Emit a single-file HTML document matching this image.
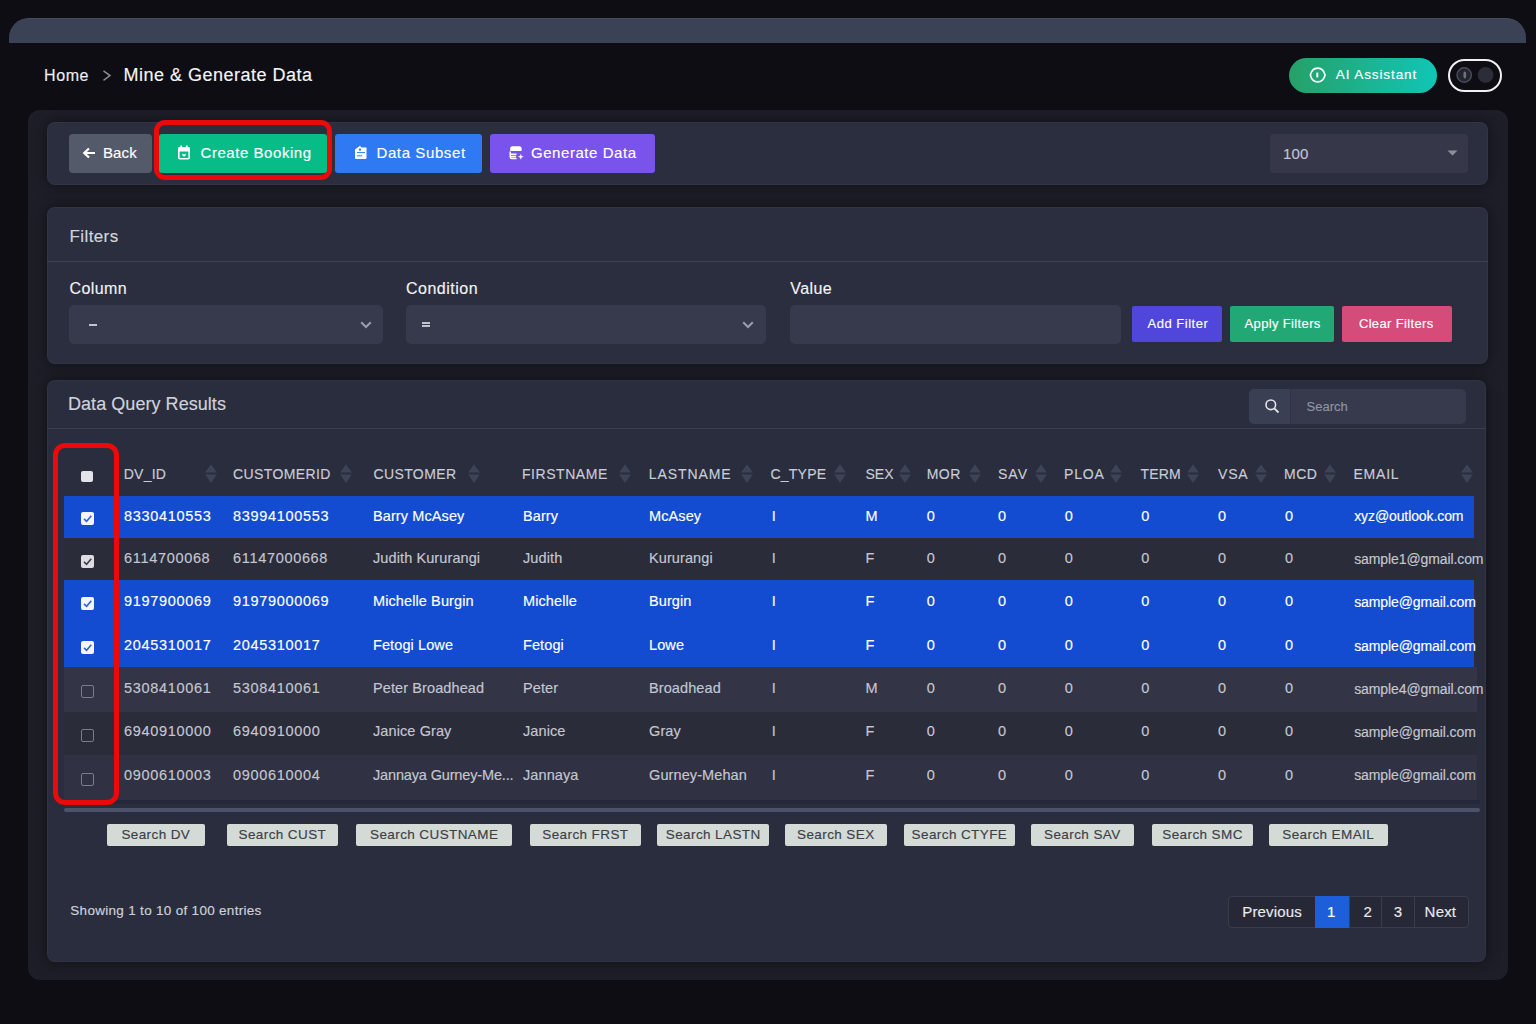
<!DOCTYPE html><html><head><meta charset="utf-8"><style>
html,body{margin:0;padding:0;width:1536px;height:1024px;overflow:hidden;background:#0e0d13;font-family:"Liberation Sans",sans-serif}
.t{position:absolute;line-height:1;white-space:nowrap;-webkit-text-stroke:0.15px currentColor}
.b{position:absolute;box-sizing:border-box}
svg{position:absolute;overflow:visible}
</style></head><body>
<div class="b" style="left:9.0px;top:18.0px;width:1517.0px;height:24.8px;background:#3b4255;border-radius:20px 20px 0 0;border-top:1.5px solid #454c5f"></div>
<div class="t" style="left:44.0px;top:67.5px;font-size:16px;color:#eceef2;letter-spacing:0.6px;font-weight:400;">Home</div>
<svg style="left:102px;top:70px" width="10" height="12"><path d="M1.5 0.8 L8 5.6 L1.5 10.4" fill="none" stroke="#8a8d99" stroke-width="1.5"/></svg>
<div class="t" style="left:123.4px;top:65.8px;font-size:18px;color:#f4f5f8;letter-spacing:0.5px;font-weight:400;">Mine &amp; Generate Data</div>
<div class="b" style="left:1289.0px;top:58.0px;width:148.0px;height:35.0px;background:linear-gradient(90deg,#26a068,#10c6b6);border-radius:18px;"></div>
<svg style="left:1309px;top:68px" width="18" height="15"><path d="M1.3 7 C3.8 -2.2 13.6 -2.2 16.1 7 C13.6 16.2 3.8 16.2 1.3 7 Z" fill="none" stroke="#fff" stroke-width="1.6"/><path d="M8.3 4.6 V9.4" stroke="#fff" stroke-width="2"/></svg>
<div class="t" style="left:1335.8px;top:67.6px;font-size:13.5px;color:#ffffff;letter-spacing:0.9px;font-weight:400;">AI Assistant</div>
<div class="b" style="left:1447.5px;top:59.0px;width:54.5px;height:33.0px;background:transparent;border-radius:17px;border:2px solid #f2f2f2"></div>
<svg style="left:1455px;top:66px" width="40" height="18"><circle cx="9.2" cy="9" r="7.2" fill="#22242e" stroke="#4a4e5e" stroke-width="1.4"/><ellipse cx="9.8" cy="9" rx="1.4" ry="3.4" fill="#70737f"/><circle cx="30.6" cy="9" r="7.9" fill="#2b2d39"/></svg>
<div class="b" style="left:27.5px;top:110.0px;width:1480.5px;height:869.6px;background:#1d1e27;border-radius:12px;"></div>
<div class="b" style="left:47.0px;top:121.5px;width:1441.0px;height:63.0px;background:#2b2e3e;border-radius:8px;box-shadow:0 0 14px 2px rgba(0,0,0,0.35);border:1px solid rgba(255,255,255,0.03)"></div>
<div class="b" style="left:69.0px;top:134.0px;width:83.0px;height:38.5px;background:#555a6b;border-radius:4px;"></div>
<svg style="left:82px;top:147px" width="14" height="12"><path d="M13 6 H2.5 M7 1.5 L2.2 6 L7 10.5" fill="none" stroke="#fff" stroke-width="2.2"/></svg>
<div class="t" style="left:103.0px;top:145.3px;font-size:15px;color:#ffffff;letter-spacing:0.1px;font-weight:400;">Back</div>
<div class="b" style="left:154.0px;top:120.0px;width:178.0px;height:60.0px;background:transparent;border-radius:11px;border:5px solid #ec0909"></div>
<div class="b" style="left:159.0px;top:134.0px;width:168.0px;height:39.0px;background:#08bc87;border-radius:3px;"></div>
<svg style="left:177px;top:145px" width="14" height="15"><rect x="1.8" y="3" width="10.4" height="10.8" rx="1.2" fill="none" stroke="#fff" stroke-width="1.6"/><path d="M1 3.5 Q1 2.2 2.3 2.2 H11.7 Q13 2.2 13 3.5 V6.6 H1 Z" fill="#fff"/><path d="M4.2 0.6 V3 M9.8 0.6 V3" stroke="#fff" stroke-width="1.8"/><path d="M5 9.3 Q5.9 8.5 7 9.4 Q8.1 8.5 9 9.3 Q9 10.5 7 11.8 Q5 10.5 5 9.3 Z" fill="#fff"/></svg>
<div class="t" style="left:200.5px;top:145.3px;font-size:15px;color:#ffffff;letter-spacing:0.55px;font-weight:400;">Create Booking</div>
<div class="b" style="left:335.0px;top:134.0px;width:147.0px;height:38.5px;background:#2f79f3;border-radius:3px;"></div>
<svg style="left:354px;top:145px" width="14" height="15"><path d="M1 4.5 L6 0.8 L7.5 2.5 H12.5 V13 Q12.5 14 11.5 14 H2 Q1 14 1 13 Z" fill="#fff"/><circle cx="6" cy="4.6" r="1.2" fill="#2f79f3"/><path d="M3 7.6 H11 M3 10.8 H8" stroke="#2f79f3" stroke-width="1"/></svg>
<div class="t" style="left:376.5px;top:145.3px;font-size:15px;color:#ffffff;letter-spacing:0.6px;font-weight:400;">Data Subset</div>
<div class="b" style="left:490.0px;top:134.0px;width:165.0px;height:38.5px;background:#7a52ec;border-radius:3px;"></div>
<svg style="left:510px;top:146px" width="15" height="14"><path d="M0.2 2.2 Q0.2 0.2 2.2 0.2 H9.5 Q11.6 0.2 11.6 2.2 V5 H0.2 Z" fill="#fff"/><path d="M0.2 5.6 V11 Q0.2 12.5 1.7 12.5 H6.5 M0.9 8.2 H6.5 M0.9 10.5 H6" stroke="#fff" stroke-width="1.4" fill="none"/><path d="M10.8 7.8 L11.6 10 L13.8 10.8 L11.6 11.6 L10.8 13.8 L10 11.6 L7.8 10.8 L10 10 Z" fill="#fff"/></svg>
<div class="t" style="left:531.0px;top:145.3px;font-size:15px;color:#ffffff;letter-spacing:0.55px;font-weight:400;">Generate Data</div>
<div class="b" style="left:1270.0px;top:134.0px;width:198.0px;height:39.0px;background:#363849;border-radius:4px;"></div>
<div class="t" style="left:1283.0px;top:145.9px;font-size:15px;color:#c2c5d0;letter-spacing:0.2px;font-weight:400;">100</div>
<svg style="left:1447px;top:150px" width="11" height="6"><path d="M0.5 0.5 H10.5 L5.5 5.5 Z" fill="#8d909c"/></svg>
<div class="b" style="left:47.0px;top:207.0px;width:1441.0px;height:157.0px;background:#2b2e3e;border-radius:8px;box-shadow:0 0 14px 2px rgba(0,0,0,0.35);border:1px solid rgba(255,255,255,0.03)"></div>
<div class="b" style="left:47.0px;top:260.5px;width:1441.0px;height:1.0px;background:#3c4052;border-radius:0;"></div>
<div class="t" style="left:69.5px;top:227.6px;font-size:17px;color:#d3d5de;letter-spacing:0.4px;font-weight:400;">Filters</div>
<div class="t" style="left:69.5px;top:280.5px;font-size:16px;color:#f2f3f6;letter-spacing:0.4px;font-weight:400;">Column</div>
<div class="t" style="left:406.0px;top:280.5px;font-size:16px;color:#f2f3f6;letter-spacing:0.5px;font-weight:400;">Condition</div>
<div class="t" style="left:790.3px;top:280.5px;font-size:16px;color:#f2f3f6;letter-spacing:0.4px;font-weight:400;">Value</div>
<div class="b" style="left:69.0px;top:305.0px;width:314.0px;height:38.6px;background:#373a4d;border-radius:5px;"></div>
<div class="b" style="left:406.0px;top:305.0px;width:360.0px;height:38.6px;background:#373a4d;border-radius:5px;"></div>
<div class="b" style="left:790.0px;top:305.0px;width:331.0px;height:38.6px;background:#373a4d;border-radius:5px;"></div>
<div class="b" style="left:88.6px;top:324.1px;width:8.5px;height:1.7px;background:#c0c2cc;border-radius:0;"></div>
<div class="b" style="left:422.0px;top:322.0px;width:8.2px;height:1.6px;background:#c0c2cc;border-radius:0;"></div>
<div class="b" style="left:422.0px;top:325.3px;width:8.2px;height:1.7px;background:#c0c2cc;border-radius:0;"></div>
<svg style="left:360px;top:321px" width="12" height="8"><path d="M1.2 1.2 L6 6 L10.8 1.2" fill="none" stroke="#9a9dab" stroke-width="2"/></svg>
<svg style="left:742px;top:321px" width="12" height="8"><path d="M1.2 1.2 L6 6 L10.8 1.2" fill="none" stroke="#9a9dab" stroke-width="2"/></svg>
<div class="b" style="left:1131.6px;top:306.0px;width:90.1px;height:36.0px;background:#5046dc;border-radius:2px;"></div>
<div class="t" style="left:1147.6px;top:317.0px;font-size:13px;color:#ffffff;letter-spacing:0.5px;font-weight:400;">Add Filter</div>
<div class="b" style="left:1230.0px;top:306.0px;width:104.0px;height:36.0px;background:#21a874;border-radius:2px;"></div>
<div class="t" style="left:1244.6px;top:317.0px;font-size:13px;color:#ffffff;letter-spacing:0.35px;font-weight:400;">Apply Filters</div>
<div class="b" style="left:1342.0px;top:306.0px;width:110.0px;height:36.0px;background:#d54b79;border-radius:2px;"></div>
<div class="t" style="left:1358.9px;top:317.0px;font-size:13px;color:#ffffff;letter-spacing:0.35px;font-weight:400;">Clear Filters</div>
<div class="b" style="left:47.0px;top:380.0px;width:1439.0px;height:581.6px;background:#2a2d3e;border-radius:8px;box-shadow:0 0 14px 2px rgba(0,0,0,0.35);border:1px solid rgba(255,255,255,0.03)"></div>
<div class="b" style="left:47.0px;top:427.5px;width:1439.0px;height:1.0px;background:#3a3e50;border-radius:0;"></div>
<div class="t" style="left:68.0px;top:394.8px;font-size:18px;color:#d0d2db;letter-spacing:0.05px;font-weight:400;">Data Query Results</div>
<div class="b" style="left:1249.0px;top:388.5px;width:216.5px;height:35.5px;background:#363a4c;border-radius:5px;"></div>
<div class="b" style="left:1249.0px;top:388.5px;width:41.6px;height:35.5px;background:#3b3f53;border-radius:5px 0 0 5px;"></div>
<div class="b" style="left:1290.0px;top:388.5px;width:1.0px;height:35.5px;background:#2f3242;border-radius:0;"></div>
<svg style="left:1264px;top:398px" width="16" height="16"><circle cx="6.8" cy="6.8" r="4.8" fill="none" stroke="#e2e4ea" stroke-width="1.6"/><path d="M10.3 10.3 L14.5 14.5" stroke="#e2e4ea" stroke-width="1.8"/></svg>
<div class="t" style="left:1306.5px;top:399.7px;font-size:13px;color:#8f93a3;letter-spacing:0px;font-weight:400;">Search</div>
<div class="t" style="left:123.8px;top:466.9px;font-size:14px;color:#c9ccd6;letter-spacing:0.2px;font-weight:400;">DV_ID</div>
<svg style="left:204.5px;top:464px" width="12" height="19"><path d="M6 0.2 L11.8 8.6 H0.2 Z M0.2 10.6 H11.8 L6 19 Z" fill="#3e4456"/></svg>
<div class="t" style="left:233.0px;top:466.9px;font-size:14px;color:#c9ccd6;letter-spacing:0.4px;font-weight:400;">CUSTOMERID</div>
<svg style="left:340.0px;top:464px" width="12" height="19"><path d="M6 0.2 L11.8 8.6 H0.2 Z M0.2 10.6 H11.8 L6 19 Z" fill="#3e4456"/></svg>
<div class="t" style="left:373.4px;top:466.9px;font-size:14px;color:#c9ccd6;letter-spacing:0.4px;font-weight:400;">CUSTOMER</div>
<svg style="left:468.0px;top:464px" width="12" height="19"><path d="M6 0.2 L11.8 8.6 H0.2 Z M0.2 10.6 H11.8 L6 19 Z" fill="#3e4456"/></svg>
<div class="t" style="left:522.0px;top:466.9px;font-size:14px;color:#c9ccd6;letter-spacing:0.55px;font-weight:400;">FIRSTNAME</div>
<svg style="left:618.8px;top:464px" width="12" height="19"><path d="M6 0.2 L11.8 8.6 H0.2 Z M0.2 10.6 H11.8 L6 19 Z" fill="#3e4456"/></svg>
<div class="t" style="left:648.8px;top:466.9px;font-size:14px;color:#c9ccd6;letter-spacing:0.9px;font-weight:400;">LASTNAME</div>
<svg style="left:741.2px;top:464px" width="12" height="19"><path d="M6 0.2 L11.8 8.6 H0.2 Z M0.2 10.6 H11.8 L6 19 Z" fill="#3e4456"/></svg>
<div class="t" style="left:770.4px;top:466.9px;font-size:14px;color:#c9ccd6;letter-spacing:0.25px;font-weight:400;">C_TYPE</div>
<svg style="left:834.2px;top:464px" width="12" height="19"><path d="M6 0.2 L11.8 8.6 H0.2 Z M0.2 10.6 H11.8 L6 19 Z" fill="#3e4456"/></svg>
<div class="t" style="left:865.5px;top:466.9px;font-size:14px;color:#c9ccd6;letter-spacing:0px;font-weight:400;">SEX</div>
<svg style="left:899.2px;top:464px" width="12" height="19"><path d="M6 0.2 L11.8 8.6 H0.2 Z M0.2 10.6 H11.8 L6 19 Z" fill="#3e4456"/></svg>
<div class="t" style="left:926.7px;top:466.9px;font-size:14px;color:#c9ccd6;letter-spacing:0.5px;font-weight:400;">MOR</div>
<svg style="left:969.4px;top:464px" width="12" height="19"><path d="M6 0.2 L11.8 8.6 H0.2 Z M0.2 10.6 H11.8 L6 19 Z" fill="#3e4456"/></svg>
<div class="t" style="left:998.0px;top:466.9px;font-size:14px;color:#c9ccd6;letter-spacing:1.0px;font-weight:400;">SAV</div>
<svg style="left:1035.0px;top:464px" width="12" height="19"><path d="M6 0.2 L11.8 8.6 H0.2 Z M0.2 10.6 H11.8 L6 19 Z" fill="#3e4456"/></svg>
<div class="t" style="left:1064.0px;top:466.9px;font-size:14px;color:#c9ccd6;letter-spacing:0.8px;font-weight:400;">PLOA</div>
<svg style="left:1109.8px;top:464px" width="12" height="19"><path d="M6 0.2 L11.8 8.6 H0.2 Z M0.2 10.6 H11.8 L6 19 Z" fill="#3e4456"/></svg>
<div class="t" style="left:1140.4px;top:466.9px;font-size:14px;color:#c9ccd6;letter-spacing:0.2px;font-weight:400;">TERM</div>
<svg style="left:1187.0px;top:464px" width="12" height="19"><path d="M6 0.2 L11.8 8.6 H0.2 Z M0.2 10.6 H11.8 L6 19 Z" fill="#3e4456"/></svg>
<div class="t" style="left:1218.0px;top:466.9px;font-size:14px;color:#c9ccd6;letter-spacing:0.8px;font-weight:400;">VSA</div>
<svg style="left:1254.6px;top:464px" width="12" height="19"><path d="M6 0.2 L11.8 8.6 H0.2 Z M0.2 10.6 H11.8 L6 19 Z" fill="#3e4456"/></svg>
<div class="t" style="left:1284.0px;top:466.9px;font-size:14px;color:#c9ccd6;letter-spacing:0.5px;font-weight:400;">MCD</div>
<svg style="left:1324.0px;top:464px" width="12" height="19"><path d="M6 0.2 L11.8 8.6 H0.2 Z M0.2 10.6 H11.8 L6 19 Z" fill="#3e4456"/></svg>
<div class="t" style="left:1353.4px;top:466.9px;font-size:14px;color:#c9ccd6;letter-spacing:0.8px;font-weight:400;">EMAIL</div>
<svg style="left:1461.2px;top:464px" width="12" height="19"><path d="M6 0.2 L11.8 8.6 H0.2 Z M0.2 10.6 H11.8 L6 19 Z" fill="#3e4456"/></svg>
<div class="b" style="left:81.0px;top:470.5px;width:11.5px;height:11.0px;background:#e3e4ea;border-radius:2px;"></div>
<div class="b" style="left:64.0px;top:495.5px;width:1410.0px;height:42.2px;background:#134cd1;border-radius:0;"></div>
<div class="b" style="left:81.0px;top:512.1px;width:13.0px;height:13.0px;background:#f4f5f8;border-radius:2px;"></div>
<svg style="left:81px;top:512.1px" width="13" height="13"><path d="M3 6.8 L5.6 9.3 L10.3 3.8" fill="none" stroke="#2f62d6" stroke-width="1.6"/></svg>
<div class="t" style="left:124.0px;top:509.0px;font-size:14.5px;color:#ffffff;letter-spacing:0.68px;font-weight:400;">8330410553</div>
<div class="t" style="left:233.0px;top:509.0px;font-size:14.5px;color:#ffffff;letter-spacing:0.68px;font-weight:400;">83994100553</div>
<div class="t" style="left:373.0px;top:509.0px;font-size:14.5px;color:#ffffff;letter-spacing:0.1px;font-weight:400;">Barry McAsey</div>
<div class="t" style="left:523.0px;top:509.0px;font-size:14.5px;color:#ffffff;letter-spacing:0.1px;font-weight:400;">Barry</div>
<div class="t" style="left:649.0px;top:509.0px;font-size:14.5px;color:#ffffff;letter-spacing:0.1px;font-weight:400;">McAsey</div>
<div class="t" style="left:771.7px;top:509.0px;font-size:14.5px;color:#ffffff;letter-spacing:0px;font-weight:400;">I</div>
<div class="t" style="left:865.5px;top:509.0px;font-size:14.5px;color:#ffffff;letter-spacing:0px;font-weight:400;">M</div>
<div class="t" style="left:926.7px;top:509.0px;font-size:14.5px;color:#ffffff;letter-spacing:0.3px;font-weight:400;">0</div>
<div class="t" style="left:998.0px;top:509.0px;font-size:14.5px;color:#ffffff;letter-spacing:0.3px;font-weight:400;">0</div>
<div class="t" style="left:1064.7px;top:509.0px;font-size:14.5px;color:#ffffff;letter-spacing:0.3px;font-weight:400;">0</div>
<div class="t" style="left:1141.2px;top:509.0px;font-size:14.5px;color:#ffffff;letter-spacing:0.3px;font-weight:400;">0</div>
<div class="t" style="left:1218.0px;top:509.0px;font-size:14.5px;color:#ffffff;letter-spacing:0.3px;font-weight:400;">0</div>
<div class="t" style="left:1285.0px;top:509.0px;font-size:14.5px;color:#ffffff;letter-spacing:0.3px;font-weight:400;">0</div>
<div class="t" style="left:1354.2px;top:509.4px;font-size:14px;color:#ffffff;letter-spacing:-0.1px;font-weight:400;">xyz@outlook.com</div>
<div class="b" style="left:64.0px;top:537.7px;width:1413.0px;height:42.6px;background:#2a2c3a;border-radius:0;"></div>
<div class="b" style="left:81.0px;top:554.5px;width:13.0px;height:13.0px;background:#dcdde3;border-radius:2px;"></div>
<svg style="left:81px;top:554.5px" width="13" height="13"><path d="M3 6.8 L5.6 9.3 L10.3 3.8" fill="none" stroke="#3d404c" stroke-width="1.6"/></svg>
<div class="t" style="left:124.0px;top:551.2px;font-size:14.5px;color:#c4c7d1;letter-spacing:0.68px;font-weight:400;">6114700068</div>
<div class="t" style="left:233.0px;top:551.2px;font-size:14.5px;color:#c4c7d1;letter-spacing:0.68px;font-weight:400;">61147000668</div>
<div class="t" style="left:373.0px;top:551.2px;font-size:14.5px;color:#c4c7d1;letter-spacing:0.1px;font-weight:400;">Judith Kururangi</div>
<div class="t" style="left:523.0px;top:551.2px;font-size:14.5px;color:#c4c7d1;letter-spacing:0.1px;font-weight:400;">Judith</div>
<div class="t" style="left:649.0px;top:551.2px;font-size:14.5px;color:#c4c7d1;letter-spacing:0.1px;font-weight:400;">Kururangi</div>
<div class="t" style="left:771.7px;top:551.2px;font-size:14.5px;color:#c4c7d1;letter-spacing:0px;font-weight:400;">I</div>
<div class="t" style="left:865.5px;top:551.2px;font-size:14.5px;color:#c4c7d1;letter-spacing:0px;font-weight:400;">F</div>
<div class="t" style="left:926.7px;top:551.2px;font-size:14.5px;color:#c4c7d1;letter-spacing:0.3px;font-weight:400;">0</div>
<div class="t" style="left:998.0px;top:551.2px;font-size:14.5px;color:#c4c7d1;letter-spacing:0.3px;font-weight:400;">0</div>
<div class="t" style="left:1064.7px;top:551.2px;font-size:14.5px;color:#c4c7d1;letter-spacing:0.3px;font-weight:400;">0</div>
<div class="t" style="left:1141.2px;top:551.2px;font-size:14.5px;color:#c4c7d1;letter-spacing:0.3px;font-weight:400;">0</div>
<div class="t" style="left:1218.0px;top:551.2px;font-size:14.5px;color:#c4c7d1;letter-spacing:0.3px;font-weight:400;">0</div>
<div class="t" style="left:1285.0px;top:551.2px;font-size:14.5px;color:#c4c7d1;letter-spacing:0.3px;font-weight:400;">0</div>
<div class="t" style="left:1354.2px;top:551.6px;font-size:14px;color:#c4c7d1;letter-spacing:-0.1px;font-weight:400;">sample1@gmail.com</div>
<div class="b" style="left:64.0px;top:580.3px;width:1410.0px;height:44.2px;background:#134cd1;border-radius:0;"></div>
<div class="b" style="left:81.0px;top:597.4px;width:13.0px;height:13.0px;background:#f4f5f8;border-radius:2px;"></div>
<svg style="left:81px;top:597.4px" width="13" height="13"><path d="M3 6.8 L5.6 9.3 L10.3 3.8" fill="none" stroke="#2f62d6" stroke-width="1.6"/></svg>
<div class="t" style="left:124.0px;top:594.4px;font-size:14.5px;color:#ffffff;letter-spacing:0.68px;font-weight:400;">9197900069</div>
<div class="t" style="left:233.0px;top:594.4px;font-size:14.5px;color:#ffffff;letter-spacing:0.68px;font-weight:400;">91979000069</div>
<div class="t" style="left:373.0px;top:594.4px;font-size:14.5px;color:#ffffff;letter-spacing:0.1px;font-weight:400;">Michelle Burgin</div>
<div class="t" style="left:523.0px;top:594.4px;font-size:14.5px;color:#ffffff;letter-spacing:0.1px;font-weight:400;">Michelle</div>
<div class="t" style="left:649.0px;top:594.4px;font-size:14.5px;color:#ffffff;letter-spacing:0.1px;font-weight:400;">Burgin</div>
<div class="t" style="left:771.7px;top:594.4px;font-size:14.5px;color:#ffffff;letter-spacing:0px;font-weight:400;">I</div>
<div class="t" style="left:865.5px;top:594.4px;font-size:14.5px;color:#ffffff;letter-spacing:0px;font-weight:400;">F</div>
<div class="t" style="left:926.7px;top:594.4px;font-size:14.5px;color:#ffffff;letter-spacing:0.3px;font-weight:400;">0</div>
<div class="t" style="left:998.0px;top:594.4px;font-size:14.5px;color:#ffffff;letter-spacing:0.3px;font-weight:400;">0</div>
<div class="t" style="left:1064.7px;top:594.4px;font-size:14.5px;color:#ffffff;letter-spacing:0.3px;font-weight:400;">0</div>
<div class="t" style="left:1141.2px;top:594.4px;font-size:14.5px;color:#ffffff;letter-spacing:0.3px;font-weight:400;">0</div>
<div class="t" style="left:1218.0px;top:594.4px;font-size:14.5px;color:#ffffff;letter-spacing:0.3px;font-weight:400;">0</div>
<div class="t" style="left:1285.0px;top:594.4px;font-size:14.5px;color:#ffffff;letter-spacing:0.3px;font-weight:400;">0</div>
<div class="t" style="left:1354.2px;top:594.8px;font-size:14px;color:#ffffff;letter-spacing:-0.1px;font-weight:400;">sample@gmail.com</div>
<div class="b" style="left:64.0px;top:623.5px;width:1410.0px;height:43.2px;background:#134cd1;border-radius:0;"></div>
<div class="b" style="left:81.0px;top:640.6px;width:13.0px;height:13.0px;background:#f4f5f8;border-radius:2px;"></div>
<svg style="left:81px;top:640.6px" width="13" height="13"><path d="M3 6.8 L5.6 9.3 L10.3 3.8" fill="none" stroke="#2f62d6" stroke-width="1.6"/></svg>
<div class="t" style="left:124.0px;top:638.2px;font-size:14.5px;color:#ffffff;letter-spacing:0.68px;font-weight:400;">2045310017</div>
<div class="t" style="left:233.0px;top:638.2px;font-size:14.5px;color:#ffffff;letter-spacing:0.68px;font-weight:400;">2045310017</div>
<div class="t" style="left:373.0px;top:638.2px;font-size:14.5px;color:#ffffff;letter-spacing:0.1px;font-weight:400;">Fetogi Lowe</div>
<div class="t" style="left:523.0px;top:638.2px;font-size:14.5px;color:#ffffff;letter-spacing:0.1px;font-weight:400;">Fetogi</div>
<div class="t" style="left:649.0px;top:638.2px;font-size:14.5px;color:#ffffff;letter-spacing:0.1px;font-weight:400;">Lowe</div>
<div class="t" style="left:771.7px;top:638.2px;font-size:14.5px;color:#ffffff;letter-spacing:0px;font-weight:400;">I</div>
<div class="t" style="left:865.5px;top:638.2px;font-size:14.5px;color:#ffffff;letter-spacing:0px;font-weight:400;">F</div>
<div class="t" style="left:926.7px;top:638.2px;font-size:14.5px;color:#ffffff;letter-spacing:0.3px;font-weight:400;">0</div>
<div class="t" style="left:998.0px;top:638.2px;font-size:14.5px;color:#ffffff;letter-spacing:0.3px;font-weight:400;">0</div>
<div class="t" style="left:1064.7px;top:638.2px;font-size:14.5px;color:#ffffff;letter-spacing:0.3px;font-weight:400;">0</div>
<div class="t" style="left:1141.2px;top:638.2px;font-size:14.5px;color:#ffffff;letter-spacing:0.3px;font-weight:400;">0</div>
<div class="t" style="left:1218.0px;top:638.2px;font-size:14.5px;color:#ffffff;letter-spacing:0.3px;font-weight:400;">0</div>
<div class="t" style="left:1285.0px;top:638.2px;font-size:14.5px;color:#ffffff;letter-spacing:0.3px;font-weight:400;">0</div>
<div class="t" style="left:1354.2px;top:638.6px;font-size:14px;color:#ffffff;letter-spacing:-0.1px;font-weight:400;">sample@gmail.com</div>
<div class="b" style="left:64.0px;top:666.7px;width:1413.0px;height:45.1px;background:#333546;border-radius:0;"></div>
<div class="b" style="left:81.0px;top:684.8px;width:13.0px;height:13.0px;background:transparent;border-radius:2px;border:1.3px solid #7a7d8a"></div>
<div class="t" style="left:124.0px;top:681.4px;font-size:14.5px;color:#c4c7d1;letter-spacing:0.68px;font-weight:400;">5308410061</div>
<div class="t" style="left:233.0px;top:681.4px;font-size:14.5px;color:#c4c7d1;letter-spacing:0.68px;font-weight:400;">5308410061</div>
<div class="t" style="left:373.0px;top:681.4px;font-size:14.5px;color:#c4c7d1;letter-spacing:0.1px;font-weight:400;">Peter Broadhead</div>
<div class="t" style="left:523.0px;top:681.4px;font-size:14.5px;color:#c4c7d1;letter-spacing:0.1px;font-weight:400;">Peter</div>
<div class="t" style="left:649.0px;top:681.4px;font-size:14.5px;color:#c4c7d1;letter-spacing:0.1px;font-weight:400;">Broadhead</div>
<div class="t" style="left:771.7px;top:681.4px;font-size:14.5px;color:#c4c7d1;letter-spacing:0px;font-weight:400;">I</div>
<div class="t" style="left:865.5px;top:681.4px;font-size:14.5px;color:#c4c7d1;letter-spacing:0px;font-weight:400;">M</div>
<div class="t" style="left:926.7px;top:681.4px;font-size:14.5px;color:#c4c7d1;letter-spacing:0.3px;font-weight:400;">0</div>
<div class="t" style="left:998.0px;top:681.4px;font-size:14.5px;color:#c4c7d1;letter-spacing:0.3px;font-weight:400;">0</div>
<div class="t" style="left:1064.7px;top:681.4px;font-size:14.5px;color:#c4c7d1;letter-spacing:0.3px;font-weight:400;">0</div>
<div class="t" style="left:1141.2px;top:681.4px;font-size:14.5px;color:#c4c7d1;letter-spacing:0.3px;font-weight:400;">0</div>
<div class="t" style="left:1218.0px;top:681.4px;font-size:14.5px;color:#c4c7d1;letter-spacing:0.3px;font-weight:400;">0</div>
<div class="t" style="left:1285.0px;top:681.4px;font-size:14.5px;color:#c4c7d1;letter-spacing:0.3px;font-weight:400;">0</div>
<div class="t" style="left:1354.2px;top:681.8px;font-size:14px;color:#c4c7d1;letter-spacing:-0.1px;font-weight:400;">sample4@gmail.com</div>
<div class="b" style="left:64.0px;top:711.8px;width:1413.0px;height:43.2px;background:#2a2c3a;border-radius:0;"></div>
<div class="b" style="left:81.0px;top:728.9px;width:13.0px;height:13.0px;background:transparent;border-radius:2px;border:1.3px solid #7a7d8a"></div>
<div class="t" style="left:124.0px;top:724.3px;font-size:14.5px;color:#c4c7d1;letter-spacing:0.68px;font-weight:400;">6940910000</div>
<div class="t" style="left:233.0px;top:724.3px;font-size:14.5px;color:#c4c7d1;letter-spacing:0.68px;font-weight:400;">6940910000</div>
<div class="t" style="left:373.0px;top:724.3px;font-size:14.5px;color:#c4c7d1;letter-spacing:0.1px;font-weight:400;">Janice Gray</div>
<div class="t" style="left:523.0px;top:724.3px;font-size:14.5px;color:#c4c7d1;letter-spacing:0.1px;font-weight:400;">Janice</div>
<div class="t" style="left:649.0px;top:724.3px;font-size:14.5px;color:#c4c7d1;letter-spacing:0.1px;font-weight:400;">Gray</div>
<div class="t" style="left:771.7px;top:724.3px;font-size:14.5px;color:#c4c7d1;letter-spacing:0px;font-weight:400;">I</div>
<div class="t" style="left:865.5px;top:724.3px;font-size:14.5px;color:#c4c7d1;letter-spacing:0px;font-weight:400;">F</div>
<div class="t" style="left:926.7px;top:724.3px;font-size:14.5px;color:#c4c7d1;letter-spacing:0.3px;font-weight:400;">0</div>
<div class="t" style="left:998.0px;top:724.3px;font-size:14.5px;color:#c4c7d1;letter-spacing:0.3px;font-weight:400;">0</div>
<div class="t" style="left:1064.7px;top:724.3px;font-size:14.5px;color:#c4c7d1;letter-spacing:0.3px;font-weight:400;">0</div>
<div class="t" style="left:1141.2px;top:724.3px;font-size:14.5px;color:#c4c7d1;letter-spacing:0.3px;font-weight:400;">0</div>
<div class="t" style="left:1218.0px;top:724.3px;font-size:14.5px;color:#c4c7d1;letter-spacing:0.3px;font-weight:400;">0</div>
<div class="t" style="left:1285.0px;top:724.3px;font-size:14.5px;color:#c4c7d1;letter-spacing:0.3px;font-weight:400;">0</div>
<div class="t" style="left:1354.2px;top:724.7px;font-size:14px;color:#c4c7d1;letter-spacing:-0.1px;font-weight:400;">sample@gmail.com</div>
<div class="b" style="left:64.0px;top:755.0px;width:1413.0px;height:45.0px;background:#303243;border-radius:0;"></div>
<div class="b" style="left:81.0px;top:773.0px;width:13.0px;height:13.0px;background:transparent;border-radius:2px;border:1.3px solid #7a7d8a"></div>
<div class="t" style="left:124.0px;top:767.7px;font-size:14.5px;color:#c4c7d1;letter-spacing:0.68px;font-weight:400;">0900610003</div>
<div class="t" style="left:233.0px;top:767.7px;font-size:14.5px;color:#c4c7d1;letter-spacing:0.68px;font-weight:400;">0900610004</div>
<div class="t" style="left:373.0px;top:767.7px;font-size:14.5px;color:#c4c7d1;letter-spacing:-0.15px;font-weight:400;">Jannaya Gurney-Me...</div>
<div class="t" style="left:523.0px;top:767.7px;font-size:14.5px;color:#c4c7d1;letter-spacing:0.1px;font-weight:400;">Jannaya</div>
<div class="t" style="left:649.0px;top:767.7px;font-size:14.5px;color:#c4c7d1;letter-spacing:0.1px;font-weight:400;">Gurney-Mehan</div>
<div class="t" style="left:771.7px;top:767.7px;font-size:14.5px;color:#c4c7d1;letter-spacing:0px;font-weight:400;">I</div>
<div class="t" style="left:865.5px;top:767.7px;font-size:14.5px;color:#c4c7d1;letter-spacing:0px;font-weight:400;">F</div>
<div class="t" style="left:926.7px;top:767.7px;font-size:14.5px;color:#c4c7d1;letter-spacing:0.3px;font-weight:400;">0</div>
<div class="t" style="left:998.0px;top:767.7px;font-size:14.5px;color:#c4c7d1;letter-spacing:0.3px;font-weight:400;">0</div>
<div class="t" style="left:1064.7px;top:767.7px;font-size:14.5px;color:#c4c7d1;letter-spacing:0.3px;font-weight:400;">0</div>
<div class="t" style="left:1141.2px;top:767.7px;font-size:14.5px;color:#c4c7d1;letter-spacing:0.3px;font-weight:400;">0</div>
<div class="t" style="left:1218.0px;top:767.7px;font-size:14.5px;color:#c4c7d1;letter-spacing:0.3px;font-weight:400;">0</div>
<div class="t" style="left:1285.0px;top:767.7px;font-size:14.5px;color:#c4c7d1;letter-spacing:0.3px;font-weight:400;">0</div>
<div class="t" style="left:1354.2px;top:768.1px;font-size:14px;color:#c4c7d1;letter-spacing:-0.1px;font-weight:400;">sample@gmail.com</div>
<div class="b" style="left:64.0px;top:800.0px;width:1416.0px;height:3.5px;background:#25273a;border-radius:0;"></div>
<div class="b" style="left:53.0px;top:443.0px;width:66.0px;height:361.5px;background:transparent;border-radius:12px;border:5px solid #ec0909"></div>
<div class="b" style="left:64.0px;top:807.5px;width:1416.0px;height:4.0px;background:#4e536b;border-radius:2px;"></div>
<div class="b" style="left:106.7px;top:824.0px;width:98.3px;height:22.0px;background:#d4dad5;border-radius:2px;"></div>
<div class="t" style="left:106.7px;width:98.3px;top:827.6px;font-size:13.5px;color:#3b3f4a;letter-spacing:0.4px;text-align:center">Search DV</div>
<div class="b" style="left:226.8px;top:824.0px;width:111.2px;height:22.0px;background:#d4dad5;border-radius:2px;"></div>
<div class="t" style="left:226.8px;width:111.2px;top:827.6px;font-size:13.5px;color:#3b3f4a;letter-spacing:0.4px;text-align:center">Search CUST</div>
<div class="b" style="left:356.4px;top:824.0px;width:155.6px;height:22.0px;background:#d4dad5;border-radius:2px;"></div>
<div class="t" style="left:356.4px;width:155.6px;top:827.6px;font-size:13.5px;color:#3b3f4a;letter-spacing:0.4px;text-align:center">Search CUSTNAME</div>
<div class="b" style="left:529.8px;top:824.0px;width:111.2px;height:22.0px;background:#d4dad5;border-radius:2px;"></div>
<div class="t" style="left:529.8px;width:111.2px;top:827.6px;font-size:13.5px;color:#3b3f4a;letter-spacing:0.4px;text-align:center">Search FRST</div>
<div class="b" style="left:657.4px;top:824.0px;width:111.6px;height:22.0px;background:#d4dad5;border-radius:2px;"></div>
<div class="t" style="left:657.4px;width:111.6px;top:827.6px;font-size:13.5px;color:#3b3f4a;letter-spacing:0.4px;text-align:center">Search LASTN</div>
<div class="b" style="left:784.6px;top:824.0px;width:102.4px;height:22.0px;background:#d4dad5;border-radius:2px;"></div>
<div class="t" style="left:784.6px;width:102.4px;top:827.6px;font-size:13.5px;color:#3b3f4a;letter-spacing:0.4px;text-align:center">Search SEX</div>
<div class="b" style="left:904.0px;top:824.0px;width:110.8px;height:22.0px;background:#d4dad5;border-radius:2px;"></div>
<div class="t" style="left:904.0px;width:110.8px;top:827.6px;font-size:13.5px;color:#3b3f4a;letter-spacing:0.4px;text-align:center">Search CTYFE</div>
<div class="b" style="left:1031.0px;top:824.0px;width:102.7px;height:22.0px;background:#d4dad5;border-radius:2px;"></div>
<div class="t" style="left:1031.0px;width:102.7px;top:827.6px;font-size:13.5px;color:#3b3f4a;letter-spacing:0.4px;text-align:center">Search SAV</div>
<div class="b" style="left:1151.6px;top:824.0px;width:101.9px;height:22.0px;background:#d4dad5;border-radius:2px;"></div>
<div class="t" style="left:1151.6px;width:101.9px;top:827.6px;font-size:13.5px;color:#3b3f4a;letter-spacing:0.4px;text-align:center">Search SMC</div>
<div class="b" style="left:1268.8px;top:824.0px;width:118.8px;height:22.0px;background:#d4dad5;border-radius:2px;"></div>
<div class="t" style="left:1268.8px;width:118.8px;top:827.6px;font-size:13.5px;color:#3b3f4a;letter-spacing:0.4px;text-align:center">Search EMAIL</div>
<div class="t" style="left:70.3px;top:903.8px;font-size:13.5px;color:#d0d2db;letter-spacing:0.3px;font-weight:400;">Showing 1 to 10 of 100 entries</div>
<div class="b" style="left:1228.0px;top:896.0px;width:241.0px;height:31.5px;background:#262836;border-radius:4px;border:1px solid #3a3d4e"></div>
<div class="b" style="left:1315.0px;top:896.0px;width:34.0px;height:31.5px;background:#1d5fdb;border-radius:0;"></div>
<div class="b" style="left:1381.0px;top:897.0px;width:1.0px;height:29.5px;background:#3a3d4e;border-radius:0;"></div>
<div class="b" style="left:1413.5px;top:897.0px;width:1.0px;height:29.5px;background:#3a3d4e;border-radius:0;"></div>
<div class="b" style="left:1349.0px;top:897.0px;width:1.0px;height:29.5px;background:#3a3d4e;border-radius:0;"></div>
<div class="t" style="left:1242.3px;top:903.8px;font-size:15px;color:#e9eaef;letter-spacing:0.15px;font-weight:400;">Previous</div>
<div class="t" style="left:1327.0px;top:903.8px;font-size:15px;color:#ffffff;letter-spacing:0px;font-weight:400;">1</div>
<div class="t" style="left:1363.5px;top:903.8px;font-size:15px;color:#e9eaef;letter-spacing:0px;font-weight:400;">2</div>
<div class="t" style="left:1393.7px;top:903.8px;font-size:15px;color:#e9eaef;letter-spacing:0px;font-weight:400;">3</div>
<div class="t" style="left:1424.6px;top:903.8px;font-size:15px;color:#e9eaef;letter-spacing:0.2px;font-weight:400;">Next</div>
</body></html>
